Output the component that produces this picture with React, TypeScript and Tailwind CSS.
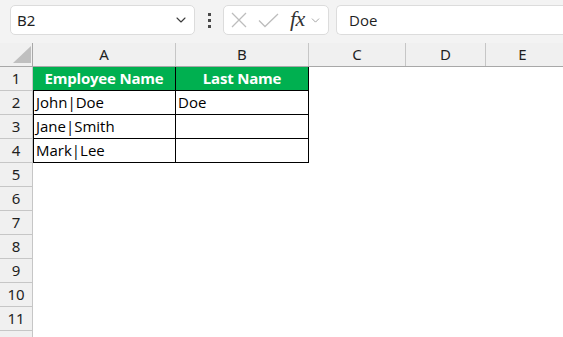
import { ChevronDown } from 'lucide-react';

const cellFont = { fontFamily: '"Open Sans", "Noto Sans", sans-serif' };
const uiFont = { fontFamily: '"Noto Sans", "Open Sans", sans-serif' };

const columns = [
  { label: 'A', width: 'w-[143px]' },
  { label: 'B', width: 'w-[133px]' },
  { label: 'C', width: 'w-[97px]' },
  { label: 'D', width: 'w-[80px]' },
];

const tableRows = [
  { a: 'John|Doe', b: 'Doe' },
  { a: 'Jane|Smith', b: '' },
  { a: 'Mark|Lee', b: '' },
];

function RowHeader({ n }: { n?: number }) {
  return (
    <div
      className="w-[33px] h-full shrink-0 bg-[#f0f0f0] border-r border-b border-[#c6c6c6] flex items-center justify-center text-[15px] text-[#1f1f1f]"
      style={uiFont}
    >
      {n}
    </div>
  );
}

export default function App() {
  const blankRows = [5, 6, 7, 8, 9, 10, 11];

  return (
    <div className="w-[563px] h-[337px] overflow-hidden bg-white">
      {/* Toolbar: name box + formula bar */}
      <div className="h-[43px] bg-[#f3f3f3] flex items-start pt-[5px] pl-[10px]">
        <div
          className="w-[185px] h-[30px] bg-white border border-[#dcdcdc] rounded-[5px] flex items-center justify-between pl-[6px] pr-[5px] text-[15px] text-[#1f1f1f]"
          style={uiFont}
        >
          <span>B2</span>
          <ChevronDown size={16} strokeWidth={1.6} className="text-[#3a3a3a]" />
        </div>
        <div className="w-[28px] h-[30px] flex flex-col items-center justify-center gap-[3px]">
          <span className="w-[3px] h-[3px] bg-[#4a4a4a]" />
          <span className="w-[3px] h-[3px] bg-[#4a4a4a]" />
          <span className="w-[3px] h-[3px] bg-[#4a4a4a]" />
        </div>
        <div className="w-[106px] h-[30px] bg-white border border-[#dcdcdc] rounded-[5px] flex items-center pl-[7px]">
          <svg width="16" height="16" viewBox="0 0 16 16" className="shrink-0">
            <path d="M1 1 L15 15 M15 1 L1 15" stroke="#bdbdbd" strokeWidth="1.3" fill="none" />
          </svg>
          <svg width="21" height="15" viewBox="0 0 21 15" className="ml-[11px] shrink-0">
            <path d="M1 7.5 L7 13.5 L20 1" stroke="#bdbdbd" strokeWidth="1.3" fill="none" />
          </svg>
          <span
            className="ml-[11px] italic text-[22px] leading-none text-[#333] -mt-[3px] tracking-[-0.5px]"
            style={{ fontFamily: '"Liberation Serif", "DejaVu Serif", serif' }}
          >
            fx
          </span>
          <ChevronDown size={13} strokeWidth={1.4} className="ml-[4px] text-[#8a8a8a]" />
        </div>
        <div
          className="flex-1 h-[30px] ml-[7px] bg-white border border-[#dcdcdc] border-r-0 rounded-l-[5px] flex items-center pl-[12px] text-[15px] text-[#1f1f1f]"
          style={cellFont}
        >
          Doe
        </div>
      </div>

      {/* Column headers */}
      <div className="h-[24px] flex bg-[#f0f0f0] border-b border-[#a8a8a8]">
        <div className="w-[33px] shrink-0 border-r border-[#a8a8a8] relative">
          <svg width="20" height="18" viewBox="0 0 20 18" className="absolute left-[12px] top-[3px]">
            <path d="M19 0 L19 17 L1 17 Z" fill="#bfbfbf" />
          </svg>
        </div>
        {columns.map((col) => (
          <div
            key={col.label}
            className={`${col.width} shrink-0 border-r border-[#c6c6c6] flex items-center justify-center text-[15px] text-[#1f1f1f]`}
            style={uiFont}
          >
            {col.label}
          </div>
        ))}
        <div className="flex-1 flex items-center justify-center pr-[4px] text-[15px] text-[#1f1f1f]" style={uiFont}>
          E
        </div>
      </div>

      {/* Row 1: table header */}
      <div className="h-[24px] flex">
        <RowHeader n={1} />
        <div
          className="w-[143px] shrink-0 bg-[#00b050] border-r border-b border-black flex items-center justify-center text-white font-bold text-[15px] tracking-[-0.2px]"
          style={cellFont}
        >
          Employee Name
        </div>
        <div
          className="w-[133px] shrink-0 bg-[#00b050] border-r border-b border-black flex items-center justify-center text-white font-bold text-[15px] tracking-[-0.2px]"
          style={cellFont}
        >
          Last Name
        </div>
      </div>

      {/* Rows 2-4: data */}
      {tableRows.map((row, i) => (
        <div key={i} className="h-[24px] flex">
          <RowHeader n={i + 2} />
          <div
            className="w-[143px] shrink-0 border-l border-r border-b border-black flex items-end pl-[2px] pb-[1px] text-[15px] text-black"
            style={cellFont}
          >
            {row.a}
          </div>
          <div
            className="w-[133px] shrink-0 border-r border-b border-black flex items-end pl-[2px] pb-[1px] text-[15px] text-black"
            style={cellFont}
          >
            {row.b}
          </div>
        </div>
      ))}

      {/* Empty rows */}
      {blankRows.map((n) => (
        <div key={n} className="h-[24px] flex">
          <RowHeader n={n} />
        </div>
      ))}
      <div className="h-[24px] flex">
        <RowHeader />
      </div>
    </div>
  );
}
